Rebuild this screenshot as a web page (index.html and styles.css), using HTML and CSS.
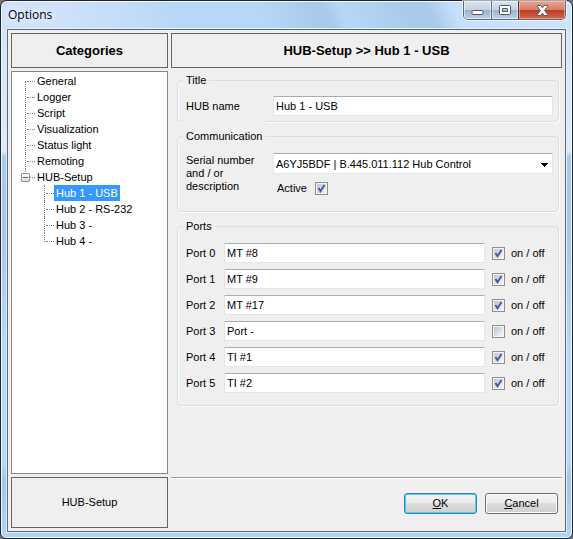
FILE: index.html
```html
<!DOCTYPE html>
<html lang="en">
<head>
<meta charset="utf-8">
<title>Options</title>
<link rel="stylesheet" href="styles.css">
</head>
<body>
<div class="window">
  <header class="titlebar">
    <h1 class="window-title">Options</h1>
    <div class="caption">
      <button class="cap cap-min" type="button" aria-label="Minimize"><svg width="13" height="11" viewBox="0 0 13 11"><rect x="1" y="5.5" width="11" height="4" rx="1" fill="#fff" stroke="#535666"/></svg></button>
      <button class="cap cap-max" type="button" aria-label="Maximize"><svg width="13" height="11" viewBox="0 0 13 11"><path fill="#fff" stroke="#535666" fill-rule="evenodd" d="M1.500 .500h9q1 0 1 1v7q0 1-1 1h-9q-1 0-1-1v-7q0-1 1-1zM3.500 3.500v3h5v-3z"/></svg></button>
      <button class="cap cap-close" type="button" aria-label="Close"><svg width="13" height="11" viewBox="0 0 13 11"><path fill="#fff" stroke="#535666" stroke-linejoin="round" d="M1.500 .500h3l2 2.300 2-2.300h3l.200.900-3.100 4.100 3.100 4.100-.200.900h-3l-2-2.300-2 2.300h-3l-.200-.900 3.100-4.100L1.300 1.400z"/></svg></button>
    </div>
  </header>
  <div class="client">
    <h2 class="panel heading">Categories</h2>
    <h2 class="panel heading">HUB-Setup &gt;&gt; Hub 1 - USB</h2>
    <nav class="tree-box">
      <ul class="tree">
        <li><a href="#">General</a></li>
        <li><a href="#">Logger</a></li>
        <li><a href="#">Script</a></li>
        <li><a href="#">Visualization</a></li>
        <li><a href="#">Status light</a></li>
        <li><a href="#">Remoting</a></li>
        <li><button class="expander" type="button" aria-label="Collapse"></button><a href="#">HUB-Setup</a>
          <ul class="branch">
            <li><a class="selected" href="#">Hub 1 - USB</a></li>
            <li><a href="#">Hub 2 - RS-232</a></li>
            <li><a href="#">Hub 3 -</a></li>
            <li><a href="#">Hub 4 -</a></li>
          </ul>
        </li>
      </ul>
    </nav>
    <main class="content">
      <fieldset class="group group-title">
        <legend>Title</legend>
        <div class="field">
          <label for="name">HUB name</label>
          <input class="text" id="name" type="text" value="Hub 1 - USB">
        </div>
      </fieldset>
      <fieldset class="group group-comm">
        <legend>Communication</legend>
        <div class="field field-top">
          <label for="serial">Serial number<br>and / or<br>description</label>
          <div>
            <select class="text combo" id="serial"><option>A6YJ5BDF | B.445.011.112 Hub Control</option></select>
            <div class="active"><label for="active">Active</label><input class="check" id="active" type="checkbox" checked></div>
          </div>
        </div>
      </fieldset>
      <fieldset class="group group-ports">
        <legend>Ports</legend>
        <div class="port"><label for="p0">Port 0</label><input class="text" id="p0" type="text" value="MT #8"><input class="check" id="c0" type="checkbox" checked><label for="c0">on / off</label></div>
        <div class="port"><label for="p1">Port 1</label><input class="text" id="p1" type="text" value="MT #9"><input class="check" id="c1" type="checkbox" checked><label for="c1">on / off</label></div>
        <div class="port"><label for="p2">Port 2</label><input class="text" id="p2" type="text" value="MT #17"><input class="check" id="c2" type="checkbox" checked><label for="c2">on / off</label></div>
        <div class="port"><label for="p3">Port 3</label><input class="text" id="p3" type="text" value="Port -"><input class="check" id="c3" type="checkbox"><label for="c3">on / off</label></div>
        <div class="port"><label for="p4">Port 4</label><input class="text" id="p4" type="text" value="TI #1"><input class="check" id="c4" type="checkbox" checked><label for="c4">on / off</label></div>
        <div class="port"><label for="p5">Port 5</label><input class="text" id="p5" type="text" value="TI #2"><input class="check" id="c5" type="checkbox" checked><label for="c5">on / off</label></div>
      </fieldset>
    </main>
    <div class="panel status">HUB-Setup</div>
    <footer class="actions">
      <button class="btn btn-default" type="button"><u>O</u>K</button>
      <button class="btn" type="button"><u>C</u>ancel</button>
    </footer>
  </div>
</div>
</body>
</html>
```
FILE: styles.css
```css
* { box-sizing: border-box; }

body {
  margin: 0;
  background: #6f747c;
  color: #000;
  font: 11px/13px "Liberation Sans", Arial, sans-serif;
}

h1, h2, ul { margin: 0; padding: 0; }
ul { list-style: none; }
a { color: inherit; text-decoration: none; }
input, select, button { font: inherit; color: inherit; margin: 0; }

/* Window frame */
.window {
  display: flex;
  flex-direction: column;
  min-height: 100vh;
  padding: 0 6px 6px;
  border: 1px solid #20242e;
  border-radius: 7px 7px 6px 6px;
  box-shadow: inset 0 0 0 1px #eff8ff;
  background:
    linear-gradient(65deg, #cfe2fa 10%, #c2dcf8 24%, #b6d7f6 32%, #b6d8f8 46%, #a9cbea 55%, #a9cbea 57%, #b6d8f8 60%, #a9cbea 71%, #a9cbea 75%, #c5dffc 79%, #cfe4fd 100%) top / 100% 30px no-repeat,
    linear-gradient(#cfe3fb 0, #dcebfc 150px, #a6caee 156px, #a9c6e8 230px, #b4d9fa 350px, #b4d9fa 460px, #a3c6ea 480px, #b0d3f8 100%);
}

.titlebar {
  display: flex;
  justify-content: space-between;
  height: 28px;
}

.window-title {
  padding: 6px 1px;
  font: 12px/16px "Open Sans", "Noto Sans", sans-serif;
  text-shadow: 0 0 8px #fff, 0 0 8px #fff;
}

.caption {
  display: flex;
  height: 19px;
  border: 1px solid #5d6a7c;
  border-top: 0;
  border-radius: 0 0 5px 5px;
  box-shadow: 0 0 0 1px rgba(255, 255, 255, .6);
  overflow: hidden;
}

.cap {
  display: flex;
  align-items: center;
  justify-content: center;
  width: 27px;
  padding: 0;
  border: 0;
  box-shadow: inset 0 0 0 1px rgba(255, 255, 255, .55);
  background: linear-gradient(#d8e5f3 0, #c3d3e5 48%, #9db2c9 50%, #bcd2e9 100%);
}

.cap-max { border-left: 1px solid #5d6a7c; }

.cap-close {
  width: 47px;
  border-left: 1px solid #5d2a2a;
  box-shadow: inset 0 0 0 1px rgba(255, 215, 200, .5);
  background: linear-gradient(#e8a394 0, #d87c67 48%, #bb3c22 50%, #d1674b 100%);
}

/* Client area */
.client {
  flex: 1;
  display: grid;
  grid-template: 35px 1fr 51px / 157px 1fr;
  gap: 3px;
  padding: 3px;
  border: 1px solid #60686f;
  box-shadow: 0 0 0 1px #dff0ff;
  background: #efefef;
}

.panel {
  display: flex;
  align-items: center;
  justify-content: center;
  border: 1px solid #646464;
}

.heading { font-size: 13px; line-height: 16px; }

/* Category tree */
.tree-box {
  padding: 1px 0 0 13px;
  border: 1px solid #828790;
  background: #fff;
}

.tree li {
  position: relative;
  padding-left: 10px;
  line-height: 16px;
}

.tree li::before {
  content: "";
  position: absolute;
  left: 0;
  top: 0;
  height: 16px;
  border-left: 1px dotted #808080;
}

.tree li::after {
  content: "";
  position: absolute;
  left: 2px;
  top: 8px;
  width: 8px;
  border-top: 1px dotted #808080;
}

.tree > li:first-child::before { top: 8px; height: 8px; }
.tree li:last-child::before { height: 9px; }

.tree a { display: inline-block; padding: 0 2px; vertical-align: top; }
.tree .selected { background: #3399ff; color: #fff; }

.branch { padding-left: 9px; }

.expander {
  position: absolute;
  z-index: 1;
  left: -4px;
  top: 4px;
  width: 9px;
  height: 9px;
  padding: 0;
  border: 1px solid #919191;
  border-radius: 1px;
  background:
    linear-gradient(#4b63a7, #4b63a7) center / 5px 1px no-repeat,
    linear-gradient(#fff, #ddd);
}

/* Settings */
.content {
  display: flex;
  flex-direction: column;
  gap: 8px;
  padding: 3px 3px 0 6px;
}

.group {
  position: relative;
  min-width: 0;
  margin: 0;
  padding: 10px 5px 5px 8px;
  border: 1px solid #d5dfe5;
  border-radius: 4px;
  box-shadow: inset 1px 0 #fcfcfc, 1px 1px #fcfcfc;
}

.group legend {
  margin-left: -3px;
  padding: 0 3px;
}

.group-title::after {
  content: "";
  position: absolute;
  left: 5px;
  bottom: -2px;
  width: 84px;
  height: 2px;
  background: #efefef;
}

.group-title { padding-top: 9px; }
.group-comm { padding-bottom: 16px; }
.group-ports { padding-bottom: 12px; }

.field {
  display: grid;
  grid-template-columns: 87px 1fr;
  align-items: center;
}

.field-top { align-items: start; }
.field-top > label { padding-top: 1px; }

.text {
  width: 100%;
  height: 20px;
  padding: 0 2px;
  border: 1px solid #e2e6ec;
  border-top-color: #abadb3;
  border-radius: 1px;
  background: #fff;
}

.combo {
  display: block;
  height: 21px;
  padding-top: 1px;
  appearance: none;
  background: linear-gradient(#000, #000) right 4px top 9px / 7px 1px no-repeat,
    linear-gradient(#000, #000) right 5px top 10px / 5px 1px no-repeat,
    linear-gradient(#000, #000) right 6px top 11px / 3px 1px no-repeat,
    linear-gradient(#000, #000) right 7px top 12px / 1px 1px no-repeat,
    #fff;
}

.active {
  display: flex;
  align-items: center;
  gap: 8px;
  padding: 8px 0 0 4px;
}

.check {
  appearance: none;
  width: 13px;
  height: 13px;
  border: 1px solid #8e8f8f;
  box-shadow: inset 0 0 0 1px #f4f4f4;
  background: linear-gradient(135deg, #bfc4cb, #f6f6f6) center / 9px 9px no-repeat #f4f4f4;
}

.check:checked {
  background:
    url("data:image/svg+xml,%3Csvg xmlns='http://www.w3.org/2000/svg' viewBox='0 0 11 11'%3E%3Cpath d='M2.500 5l2 3.200L8.500 2' fill='none' stroke='%23475a9b' stroke-width='2'/%3E%3C/svg%3E") center / 11px 11px no-repeat,
    linear-gradient(135deg, #bfc4cb, #f6f6f6) center / 9px 9px no-repeat #f4f4f4;
}

.port {
  display: grid;
  grid-template-columns: 38px 1fr 26px 42px;
  align-items: center;
}

.port + .port { margin-top: 6px; }
.port .check { justify-self: center; }

/* Bottom bar */
.actions {
  display: flex;
  justify-content: flex-end;
  align-items: center;
  gap: 8px;
  padding-right: 4px;
  border-top: 1px solid #a0a0a0;
  box-shadow: inset 0 1px #fff;
}

.btn {
  width: 73px;
  height: 21px;
  padding: 0;
  border: 1px solid #707070;
  border-radius: 3px;
  box-shadow: inset 0 0 0 1px #fbfbfb;
  background: linear-gradient(#f2f2f2 0, #ebebeb 49%, #dddddd 50%, #cfcfcf 100%);
}

.btn-default {
  border-color: #3c7fb1;
  box-shadow: inset 0 0 0 1px #46d2f8;
}
```
